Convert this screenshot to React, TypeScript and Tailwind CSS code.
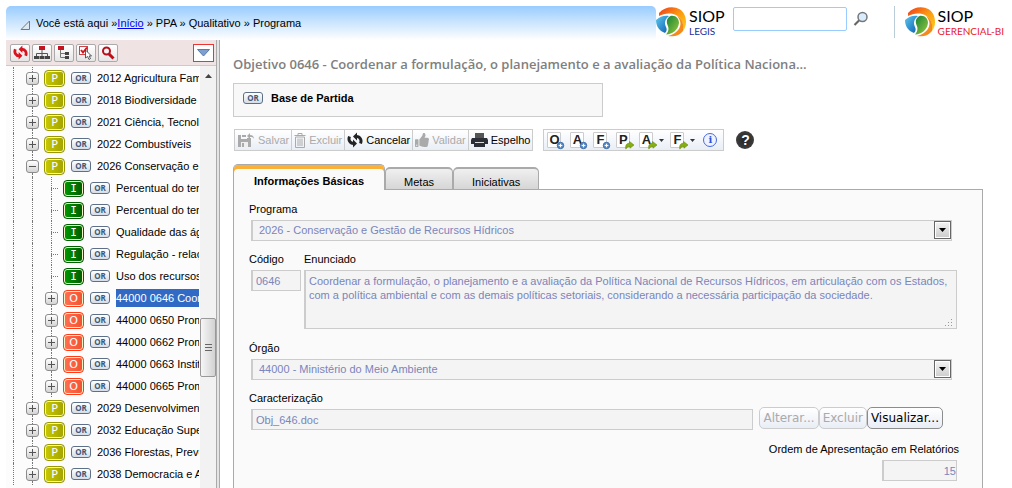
import type { ReactNode } from "react";
import { FaThumbsUp } from "react-icons/fa";

type NodeKind = "P" | "I" | "O";

interface TreeItem {
  kind: NodeKind;
  label: string;
  level: 0 | 1;
  state: "closed" | "open" | "leaf";
  selected?: boolean;
}

const items: TreeItem[] = [
  { kind: "P", label: "2012 Agricultura Familiar", level: 0, state: "closed" },
  { kind: "P", label: "2018 Biodiversidade", level: 0, state: "closed" },
  { kind: "P", label: "2021 Ciência, Tecnologia e Inovação", level: 0, state: "closed" },
  { kind: "P", label: "2022 Combustíveis", level: 0, state: "closed" },
  { kind: "P", label: "2026 Conservação e Gestão de Recursos Hídricos", level: 0, state: "open" },
  { kind: "I", label: "Percentual do território", level: 1, state: "leaf" },
  { kind: "I", label: "Percentual do território", level: 1, state: "leaf" },
  { kind: "I", label: "Qualidade das águas", level: 1, state: "leaf" },
  { kind: "I", label: "Regulação - relação", level: 1, state: "leaf" },
  { kind: "I", label: "Uso dos recursos", level: 1, state: "leaf" },
  { kind: "O", label: "44000 0646 Coordenar", level: 1, state: "closed", selected: true },
  { kind: "O", label: "44000 0650 Promover", level: 1, state: "closed" },
  { kind: "O", label: "44000 0662 Promover", level: 1, state: "closed" },
  { kind: "O", label: "44000 0663 Instituir", level: 1, state: "closed" },
  { kind: "O", label: "44000 0665 Promover", level: 1, state: "closed" },
  { kind: "P", label: "2029 Desenvolvimento Regional", level: 0, state: "closed" },
  { kind: "P", label: "2032 Educação Superior", level: 0, state: "closed" },
  { kind: "P", label: "2036 Florestas, Prevenção", level: 0, state: "closed" },
  { kind: "P", label: "2038 Democracia e Aperfeiçoamento", level: 0, state: "closed" },
];

const kindStyle: Record<NodeKind, string> = {
  P: "font-['DejaVu_Sans',sans-serif] border-[#9a9a00] bg-linear-to-r from-[#c8c800] to-[#a3a300]",
  I: "font-['DejaVu_Sans_Mono',monospace] border-[#006000] bg-linear-to-r from-[#009a00] to-[#005c00]",
  O: "font-['DejaVu_Sans',sans-serif] border-[#ff3c14] bg-linear-to-r from-[#ff7050] to-[#f25030]",
};

function SwirlLogo() {
  return (
    <svg width="31" height="31" viewBox="0 0 31 31" className="shrink-0" aria-hidden="true">
      <defs>
        <linearGradient id="swirlWarm" x1="0" y1="0" x2="1" y2="1">
          <stop offset="0" stopColor="#ee3a1c" />
          <stop offset="0.500" stopColor="#fb9a10" />
          <stop offset="1" stopColor="#ffd21c" />
        </linearGradient>
        <linearGradient id="swirlGreen" x1="0" y1="0" x2="1" y2="1">
          <stop offset="0" stopColor="#128038" />
          <stop offset="1" stopColor="#9ccb3b" />
        </linearGradient>
        <linearGradient id="swirlBlue" x1="0" y1="0" x2="1" y2="1">
          <stop offset="0" stopColor="#5cc8f0" />
          <stop offset="1" stopColor="#0d5fb0" />
        </linearGradient>
      </defs>
      <path d="M3 7C10 -1 25 -1 29 10C31 16 30 21 27 25C28 17 25 10 17 8C12 7 7 8 3 10Z" fill="url(#swirlWarm)" />
      <path d="M27 25C23 30 17 31 12 30C19 28 24 24 24.500 18C24.500 15 23 12 21 10C27 13 28 20 27 25Z" fill="#f58a1c" />
      <path d="M0 14C4 10 9 9 13 10C9 13 8 17 10 21C11 23 11 25 9 27C3 25 0 20 0 14Z" fill="url(#swirlBlue)" />
      <path d="M14.500 10C20 9 23 13 23 17C22 24 17 28 10 28.500C13 25 13 22 11.500 19C10 15 11 12 14.500 10Z" fill="url(#swirlGreen)" />
    </svg>
  );
}

function Logo({ name, color }: { name: string; color: string }) {
  return (
    <a href="#" className="flex items-start">
      <SwirlLogo />
      <span className="ml-0.5 flex flex-col font-['Lato',sans-serif]">
        <span className="text-[16px] leading-[19px] text-black">SIOP</span>
        <span className={`text-[10px] leading-[12px] whitespace-nowrap ${color}`}>{name}</span>
      </span>
    </a>
  );
}

function OrBadge() {
  return (
    <span className="flex h-3 w-5 shrink-0 items-center justify-center rounded-[3px] border border-[#5d7088] bg-linear-to-b from-white to-[#d5dde6] font-['Open_Sans',sans-serif] text-[8px] leading-none font-bold text-[#3f5878]">
      OR
    </span>
  );
}

function Expander({ open }: { open: boolean }) {
  return (
    <button
      type="button"
      aria-label={open ? "Recolher" : "Expandir"}
      className="flex size-[13px] shrink-0 items-center justify-center rounded-[3px] border border-[#8c8c8c] bg-linear-to-b from-white to-[#d4d4d4]"
    >
      <svg width="9" height="9" viewBox="0 0 9 9" stroke="#555" aria-hidden="true">
        <path d={open ? "M1 4.5H8" : "M1 4.5H8M4.5 1V8"} />
      </svg>
    </button>
  );
}

function TreeRow({ item }: { item: TreeItem }) {
  return (
    <li className="flex h-[22px] items-center">
      <span className="h-full w-2 shrink-0 border-r border-dotted border-[#777]" />
      {item.level === 1 && <span className="h-full w-[19px] shrink-0 border-r border-dotted border-[#777]" />}
      <span className="ml-3 flex h-full w-[13px] shrink-0 flex-col">
        <span className="ml-1.5 flex-1 border-l border-dotted border-[#777]" />
        {item.state === "leaf" ? (
          <span className="ml-1.5 border-t border-dotted border-[#777]" />
        ) : (
          <Expander open={item.state === "open"} />
        )}
        <span className="ml-1.5 flex-1 border-l border-dotted border-[#777]" />
      </span>
      <span
        className={`ml-[5px] flex h-[17px] w-[21px] shrink-0 items-center justify-center rounded-[4px] border pt-px text-[11px] leading-none text-white shadow-[inset_0_0_0_1px_#f4f4c8] ${kindStyle[item.kind]}`}
      >
        {item.kind}
      </span>
      <span className="ml-1.5">
        <OrBadge />
      </span>
      <a
        href="#"
        className={`ml-1.5 flex h-[18px] items-center whitespace-nowrap ${item.selected ? "bg-[#316ac5] text-white" : "text-black"}`}
      >
        {item.label}
      </a>
    </li>
  );
}

function SwapIcon({ color, size }: { color: string; size: number }) {
  return (
    <svg width={size} height={size} viewBox="0 0 16 16" aria-hidden="true">
      <g fill="none" stroke={color} strokeWidth="3">
        <path d="M2.500 4.500C1 8 3 11.500 6.500 11.500" />
        <path d="M13.500 11.500C15 8 13 4.500 9.500 4.500" />
      </g>
      <path d="M6 7.500L10 11.500L6 15.500Z" fill={color} />
      <path d="M10 0.500L6 4.500L10 8.500Z" fill={color} />
    </svg>
  );
}

function SideButton({ label, children }: { label: string; children: ReactNode }) {
  return (
    <button
      type="button"
      aria-label={label}
      className="flex h-[18px] w-5 items-center justify-center rounded-[2px] border border-[#aaa] bg-linear-to-b from-white to-[#e6e6e6]"
    >
      {children}
    </button>
  );
}

function Sidebar() {
  return (
    <aside className="flex w-[210px] shrink-0 flex-col bg-[#fcfcfc]">
      <div className="flex h-[26px] shrink-0 items-center gap-0.5 border-b border-[#d8c4c4] bg-[#f0e3e3] pr-[2px] pl-1">
        <SideButton label="Atualizar">
          <SwapIcon color="#d8141e" size={15} />
        </SideButton>
        <SideButton label="Hierarquia">
          <svg width="16" height="14" viewBox="0 0 16 14" aria-hidden="true">
            <rect x="5" y="0" width="6" height="4" fill="#c41420" />
            <path d="M8 4V10M2.500 10V7.500H13.500V10" fill="none" stroke="#555" />
            <path d="M0 10H5V13H0ZM5.500 10H10.500V13H5.500ZM11 10H16V13H11Z" fill="#444" />
          </svg>
        </SideButton>
        <SideButton label="Expandir nível">
          <svg width="14" height="14" viewBox="0 0 14 14" aria-hidden="true">
            <rect x="1" y="0" width="6" height="4" fill="#c41420" />
            <path d="M3.500 4V11.500H8M3.500 7.500H8" fill="none" stroke="#777" />
            <path d="M8 6H12V9H8ZM8 10H12V13H8Z" fill="#444" />
          </svg>
        </SideButton>
        <SideButton label="Selecionar">
          <svg width="16" height="15" viewBox="0 0 16 15" aria-hidden="true">
            <rect x="1.500" y="1.500" width="8" height="8" fill="#fff" stroke="#c44" />
            <path d="M3 5L5 7.500L9 2.500" fill="none" stroke="#d8141e" strokeWidth="2" />
            <path d="M7.500 5V13L9.500 11.500L11 14.500L12.500 13.500L11 11H13.500Z" fill="#fff" stroke="#333" strokeWidth="0.800" />
          </svg>
        </SideButton>
        <SideButton label="Pesquisar">
          <svg width="14" height="14" viewBox="0 0 14 14" fill="none" stroke="#bb101c" aria-hidden="true">
            <circle cx="5.500" cy="5" r="3.500" strokeWidth="2" />
            <path d="M8 8L12.500 12.500" strokeWidth="3" />
          </svg>
        </SideButton>
        <button
          type="button"
          aria-label="Opções"
          className="ml-auto flex h-[18px] w-[21px] items-center justify-center border border-[#e33] bg-white"
        >
          <svg width="13" height="8" viewBox="0 0 13 8" aria-hidden="true">
            <path d="M0.500 0.500H12.500L6.500 7Z" fill="#7f9fd0" stroke="#5a7aa8" />
          </svg>
        </button>
      </div>
      <div className="flex min-h-0 flex-1">
        <ul className="min-w-0 flex-1 overflow-hidden pt-px">
          {items.map((item, i) => (
            <TreeRow key={i} item={item} />
          ))}
        </ul>
        <div className="ml-px flex w-4 shrink-0 flex-col items-center bg-[#f2f2f2]">
          <svg width="7" height="4" viewBox="0 0 7 4" className="mt-2" aria-hidden="true">
            <path d="M0 4L3.500 0L7 4Z" fill="#444" />
          </svg>
          <div className="flex-[239]" />
          <div className="flex h-[59px] w-full shrink-0 flex-col items-center justify-center gap-[2px] rounded-[2px] border border-[#999] bg-linear-to-r from-[#f6f6f6] to-[#d2d2d2]">
            <span className="h-px w-[7px] bg-[#666]" />
            <span className="h-px w-[7px] bg-[#666]" />
            <span className="h-px w-[7px] bg-[#666]" />
          </div>
          <div className="flex-[111]" />
        </div>
      </div>
    </aside>
  );
}

function ToolButton({ label, icon, disabled }: { label: string; icon: ReactNode; disabled?: boolean }) {
  return (
    <button
      type="button"
      disabled={disabled}
      className="flex h-5 items-center gap-[3px] border-r border-[#ccc] px-[2px] text-black last:border-r-0 disabled:text-[#aaa]"
    >
      {icon}
      {label}
    </button>
  );
}

function PageButton({ letter, mark, menu }: { letter: string; mark: "add" | "go"; menu?: boolean }) {
  return (
    <button type="button" className="flex items-center gap-[3px]">
      <span className="relative flex h-4 w-[17px]">
        <span className="flex h-4 w-[14px] justify-center rounded-[1px] border border-[#ccc] bg-white text-[13px] leading-[14px] font-bold text-[#222]">
          {letter}
        </span>
        <svg width="9" height="9" viewBox="0 0 10 9" className="absolute -right-px -bottom-[2px]" aria-hidden="true">
          {mark === "add" ? (
            <>
              <circle cx="5" cy="4.500" r="3.600" fill="#5a8cc8" stroke="#3a66a4" />
              <path d="M5 2.500V6.500M3 4.500H7" stroke="#fff" strokeWidth="1.300" />
            </>
          ) : (
            <path d="M1 8.500C0 4 2 2 5 2V0L10 4L5.500 7.500V5.500C3 5.500 2 6.500 1 8.500Z" fill="#86b010" stroke="#5f8000" strokeWidth="0.600" />
          )}
        </svg>
      </span>
      {menu && (
        <svg width="5" height="3" viewBox="0 0 5 3" aria-hidden="true">
          <path d="M0 0H5L2.500 3Z" fill="#333" />
        </svg>
      )}
    </button>
  );
}

function Toolbar() {
  return (
    <div className="flex items-center">
      <div className="flex h-[22px] border border-[#ccc] bg-linear-to-b from-white to-[#e9eef6]">
        <ToolButton
          label="Salvar"
          disabled
          icon={
            <svg width="18" height="15" viewBox="0 0 18 15" aria-hidden="true">
              <path d="M1 2H4V6H10V5H14V14H1Z" fill="#aaa" />
              <path d="M4 9H11V14H4Z" fill="#eee" />
              <path d="M5 10H7V14H5ZM5 2H9V4H5Z" fill="#aaa" />
              <path d="M10 3L13 0V2C16 2 17 4 17 6C16 4 15 4 13 4V6Z" fill="#aaa" />
            </svg>
          }
        />
        <ToolButton
          label="Excluir"
          disabled
          icon={
            <svg width="12" height="15" viewBox="0 0 12 15" fill="none" stroke="#aaa" aria-hidden="true">
              <path d="M0.500 2.500H11.500M4 2V0.500H8V2M1.500 4V14.500H10.500V4Z" />
              <path d="M4 5.500V13M6 5.500V13M8 5.500V13" />
            </svg>
          }
        />
        <ToolButton label="Cancelar" icon={<SwapIcon color="#222" size={16} />} />
        <ToolButton label="Validar" disabled icon={<FaThumbsUp size={14} />} />
        <ToolButton
          label="Espelho"
          icon={
            <svg width="17" height="15" viewBox="0 0 17 15" aria-hidden="true">
              <path d="M4 0H13V5H4Z" fill="#555" />
              <path d="M1 5H16L17 7V11H0V7Z" fill="#2c2f38" />
              <path d="M3 9H14V14H3Z" fill="#2c2f38" />
              <path d="M4 9H13V10H4Z" fill="#ddd" />
            </svg>
          }
        />
      </div>
      <div className="ml-2.5 flex h-[22px] items-center gap-1.5 border border-[#ccc] bg-linear-to-b from-white to-[#e9eef6] pr-1.5 pl-[3px]">
        <PageButton letter="O" mark="add" />
        <PageButton letter="A" mark="add" />
        <PageButton letter="F" mark="add" />
        <PageButton letter="P" mark="go" />
        <PageButton letter="A" mark="go" menu />
        <PageButton letter="F" mark="go" menu />
        <button
          type="button"
          aria-label="Informações"
          className="ml-0.5 flex size-3.5 items-center justify-center rounded-full border border-[#4668e0] bg-[#eef3ff] font-['DejaVu_Serif',serif] text-[10px] leading-none font-bold text-[#2b50dc]"
        >
          i
        </button>
      </div>
      <button
        type="button"
        aria-label="Ajuda"
        className="ml-3 flex size-[18px] items-center justify-center rounded-full bg-radial from-[#222] to-[#4a4a4a] text-[14px] leading-none font-bold text-white"
      >
        ?
      </button>
    </div>
  );
}

function SelectField({ id, label, value }: { id: string; label: string; value: string }) {
  return (
    <div>
      <label htmlFor={id} className="block h-4 leading-4">
        {label}
      </label>
      <div className="relative mt-[3px] mr-[5px] ml-0.5">
        <select
          id={id}
          disabled
          className="block h-[21px] w-full appearance-none border border-l-2 border-[#ccc] bg-[#f4f4f4] px-1.5 text-[#7b84bb] opacity-100"
        >
          <option>{value}</option>
        </select>
        <span className="pointer-events-none absolute top-px right-px flex h-[18px] w-[17px] items-center justify-center border border-[#666] bg-linear-to-b from-[#f4f4f4] to-[#ccc] shadow-[inset_0_0_0_1px_#fff]">
          <svg width="7" height="4" viewBox="0 0 7 4" aria-hidden="true">
            <path d="M0 0H7L3.500 4Z" fill="#000" />
          </svg>
        </span>
      </div>
    </div>
  );
}

function FileButton({ label, disabled }: { label: string; disabled?: boolean }) {
  return (
    <button
      type="button"
      disabled={disabled}
      className="h-[22px] rounded-[5px] border border-[#8c8c8c] bg-linear-to-b from-white to-[#e9edf6] px-[3px] font-['DejaVu_Sans',sans-serif] text-[12px] text-black disabled:border-[#ccc] disabled:text-[#aaa]"
    >
      {label}
    </button>
  );
}

const fieldClass = "border border-l-2 border-[#ccc] bg-[#f4f4f4] text-[#7b84bb]";

function BasicForm() {
  return (
    <form className="flex-1 border border-b-0 border-[#aaa] bg-[#fafafa] pt-[11px] pr-[25px] pl-[15px]">
      <SelectField id="programa" label="Programa" value="2026 - Conservação e Gestão de Recursos Hídricos" />
      <div className="mt-[10px] flex">
        <div className="w-[55px] shrink-0">
          <label htmlFor="codigo" className="block h-4 leading-4">
            Código
          </label>
          <input id="codigo" disabled defaultValue="0646" className={`mt-[3px] ml-0.5 block h-[21px] w-[50px] px-[3px] ${fieldClass}`} />
        </div>
        <div className="flex-1">
          <label htmlFor="enunciado" className="block h-4 leading-4">
            Enunciado
          </label>
          <div className="relative mt-[3px]">
            <textarea
              id="enunciado"
              disabled
              className={`block h-[59px] w-full resize-none overflow-hidden px-[3px] py-[3px] leading-[14px] ${fieldClass}`}
              defaultValue="Coordenar a formulação, o planejamento e a avaliação da Política Nacional de Recursos Hídricos, em articulação com os Estados, com a política ambiental e com as demais políticas setoriais, considerando a necessária participação da sociedade."
            />
            <svg width="8" height="8" viewBox="0 0 8 8" className="absolute right-1 bottom-[2px]" aria-hidden="true">
              <path d="M6 0H7V1H6ZM3 3H4V4H3ZM6 3H7V4H6ZM0 6H1V7H0ZM3 6H4V7H3ZM6 6H7V7H6Z" fill="#999" />
            </svg>
          </div>
        </div>
      </div>
      <div className="mt-[11px]">
        <SelectField id="orgao" label="Órgão" value="44000 - Ministério do Meio Ambiente" />
      </div>
      <div className="mt-[10px]">
        <label htmlFor="caracterizacao" className="block h-4 leading-4">
          Caracterização
        </label>
        <div className="flex items-center pr-[14px]">
          <input
            id="caracterizacao"
            disabled
            defaultValue="Obj_646.doc"
            className={`mt-[3px] mr-1.5 ml-0.5 block h-[21px] min-w-0 flex-1 px-[3px] ${fieldClass}`}
          />
          <FileButton label="Alterar..." disabled />
          <FileButton label="Excluir" disabled />
          <FileButton label="Visualizar..." />
        </div>
      </div>
      <div className="mt-[11px] -mr-0.5 flex flex-col items-end">
        <label htmlFor="ordem" className="block h-4 leading-4">
          Ordem de Apresentação em Relatórios
        </label>
        <input id="ordem" disabled defaultValue="15" className={`mt-[3px] mr-0.5 block h-[21px] w-[75px] text-right ${fieldClass}`} />
      </div>
    </form>
  );
}

function Tab({ label }: { label: string }) {
  return (
    <button
      type="button"
      role="tab"
      aria-selected={false}
      className="h-[22px] rounded-t-[5px] border border-t-2 border-b-0 border-[#aaa] bg-linear-to-b from-[#f0f0f0] to-[#d6d6d6] px-[18px] pt-[5px]"
    >
      {label}
    </button>
  );
}

export default function App() {
  return (
    <div className="flex h-screen flex-col overflow-hidden bg-white pt-1.5 pl-1.5 font-['Liberation_Sans',Arial,sans-serif] text-[11px] text-black">
      {/* Breadcrumb and shortcuts */}
      <header className="flex h-[34px] shrink-0 items-start">
        <nav className="flex h-full flex-1 items-center rounded-t-[5px] bg-linear-to-b from-[#99ccff] to-white pl-[14px]">
          <svg width="11" height="11" viewBox="0 0 11 11" className="mt-[5px] mr-[5px]" aria-hidden="true">
            <path d="M1 9.500L9.500 1V9.500Z" fill="#dce8f4" stroke="#777" />
          </svg>
          <span className="whitespace-pre">Você está aqui »</span>
          <a href="#" className="text-[#0000ee] underline">
            Início
          </a>
          <span className="whitespace-pre"> » PPA » Qualitativo » Programa</span>
        </nav>
        <Logo name="LEGIS" color="text-[#2030a0]" />
        <form className="ml-2 flex items-center">
          <input aria-label="Pesquisar" className="mt-px h-6 w-[114px] rounded-[2px] border border-[#99ccff] bg-white px-1" />
          <button type="button" aria-label="Buscar" className="ml-1.5">
            <svg width="16" height="16" viewBox="0 0 16 16" aria-hidden="true">
              <circle cx="9.500" cy="6" r="4.500" fill="#d8ecff" stroke="#777" strokeWidth="1.500" />
              <path d="M6 9.500L1.500 14" stroke="#666" strokeWidth="2.200" />
            </svg>
          </button>
        </form>
        <span className="mr-[10px] ml-[25px] h-8 w-px bg-[#b8cdd8]" />
        <div className="pr-2">
          <Logo name="GERENCIAL-BI" color="text-[#e8202c]" />
        </div>
      </header>

      <div className="flex min-h-0 flex-1">
        <Sidebar />
        <div className="w-1 shrink-0 border-x border-[#aaa] bg-[#e4e4e4]" />
        <main className="flex min-w-0 flex-1 flex-col pr-[29px] pl-[13px]">
          <h1 className="mt-[14px] h-5 font-['Open_Sans',sans-serif] text-[13px] leading-5 font-semibold text-[#808080]">
            Objetivo 0646 - Coordenar a formulação, o planejamento e a avaliação da Política Naciona...
          </h1>
          <div className="mt-[9px] flex h-[34px] w-[370px] shrink-0 items-center gap-2 border border-[#ccc] bg-[#f8f8f8] px-[9px] pb-1 font-bold">
            <OrBadge />
            Base de Partida
          </div>
          <div className="mt-3 pl-px">
            <Toolbar />
          </div>
          <div role="tablist" className="relative z-10 mt-[13px] -mb-px flex shrink-0 items-end">
            <button
              type="button"
              role="tab"
              aria-selected={true}
              className="h-[26px] rounded-t-[5px] border border-b-0 border-[#aaa] bg-[#fafafa] px-5 pt-2 font-bold shadow-[inset_0_4px_0_#fbb03a]"
            >
              Informações Básicas
            </button>
            <div className="flex pb-px">
              <Tab label="Metas" />
              <Tab label="Iniciativas" />
            </div>
          </div>
          <BasicForm />
        </main>
      </div>
    </div>
  );
}
